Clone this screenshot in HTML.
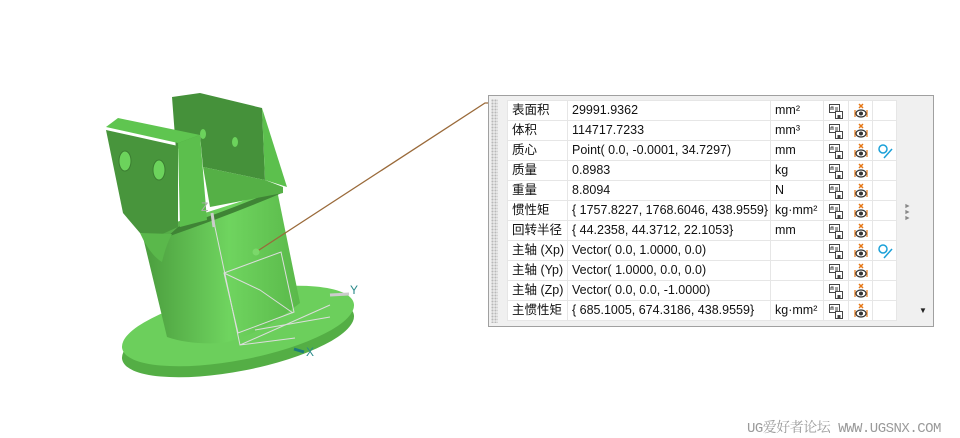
<!DOCTYPE html>
<html><head><meta charset="utf-8"><style>
body{margin:0;width:960px;height:438px;background:#fff;position:relative;overflow:hidden;font-family:"Liberation Sans","Noto Sans CJK SC",sans-serif}
#panel{position:absolute;left:488px;top:95px;width:444px;height:230px;border:1px solid #a0a0a0;background:#f0f0f0}
#grip{position:absolute;left:2px;top:3px;width:7px;height:224px;background-image:radial-gradient(#b8b8b8 1px,transparent 1.2px);background-size:3px 3px}
table{position:absolute;left:18px;top:4px;border-collapse:collapse;background:#fff;font-size:12.5px;color:#111;table-layout:fixed}
tr{height:20px}
td{border:1px solid #e6e6e6;height:20px;line-height:17px;padding:0 0 0 4px;white-space:nowrap;overflow:hidden;box-sizing:border-box}
td.i{padding:0;text-align:center}
td.i svg{display:block;margin:1px auto 0}
.w{position:absolute;left:747px;top:417px;font-family:"Liberation Mono","Noto Serif CJK SC",monospace;font-size:14px;color:#9a9a9a;letter-spacing:-0.5px}
</style></head><body>
<svg width="0" height="0" style="position:absolute">
<defs>
<g id="ic1"><rect x="1.5" y="1.5" width="10" height="8" fill="#fff" stroke="#444"/><path d="M3,4h2v3M3,4v3M7,5h3M7,7h3" stroke="#444" fill="none"/><rect x="7.5" y="8.5" width="7" height="7" fill="#fff" stroke="#444"/><rect x="9.5" y="12" width="3" height="3" fill="#444"/></g>
<g id="ic2"><path d="M6,1l4,4M10,1l-4,4" stroke="#e67817" stroke-width="1.5"/><path d="M2,7v7M2,10.5h3M14,7v7M14,10.5h-3" stroke="#e67817" stroke-width="1.2"/><ellipse cx="8" cy="10.5" rx="5" ry="3.5" fill="#fff" stroke="#333" stroke-width="1.2"/><circle cx="8" cy="10.5" r="2" fill="#333"/></g>
<g id="ic3"><circle cx="6" cy="6" r="4" fill="none" stroke="#1aa0d8" stroke-width="1.5"/><path d="M7,15L15,6" stroke="#1aa0d8" stroke-width="1.5"/></g>
</defs></svg>
<svg width="960" height="438" style="position:absolute;left:0;top:0">
<defs>
<linearGradient id="cy" x1="0" x2="1"><stop offset="0" stop-color="#4a9c3d"/><stop offset=".55" stop-color="#6fd45f"/><stop offset="1" stop-color="#5ab94a"/></linearGradient>
</defs>
<ellipse cx="238" cy="337" rx="118" ry="34" transform="rotate(-11 238 337)" fill="#54ae45"/>
<ellipse cx="238" cy="326" rx="118" ry="34" transform="rotate(-11 238 326)" fill="#6ccf5c"/>
<path d="M142,233 L277,190 L300,303 Q260,335 223,343 Q190,345 167,337 Z" fill="url(#cy)"/>
<path d="M167,237 Q230,215 282,193 L283,187 Q230,210 178,227 Z" fill="#3f8435"/>
<polygon points="172,97 200,93 262,108 265,180 203,167 200,135 176,150" fill="#45913a"/>
<polygon points="262,108 287,187 265,180" fill="#5cc04d"/>
<polygon points="203,167 265,180 283,187 283,193 210,207" fill="#55b046"/>
<polygon points="106,127 118,118 200,135 178,143" fill="#5fc550"/>
<polygon points="106,130 178,146 178,227 160,235 140,233 123,213" fill="#48953c"/>
<polygon points="178,143 200,135 207,220 180,227" fill="#5cbf4d"/>
<path d="M140,233 Q150,255 162,262 Q166,245 172,234 Z" fill="#5ab84b"/>
<ellipse cx="125" cy="161" rx="6" ry="10" fill="#6cd35c" stroke="#3b7d31"/>
<ellipse cx="159" cy="170" rx="6" ry="10" fill="#6cd35c" stroke="#3b7d31"/>
<ellipse cx="203" cy="134" rx="3" ry="5" fill="#6cd35c"/>
<ellipse cx="235" cy="142" rx="3" ry="5" fill="#6cd35c"/>
<g stroke="#ddd" fill="none" stroke-width="1">
<path d="M212,213 L240,345 L295,338 M240,345 L330,305"/>
<path d="M224,273 L281,252 L294,312 L238,333 Z M224,273 L260,290 L293,313 M255,330 L330,317"/>
</g>
<path d="M212,213 L214,227" stroke="#ccc" stroke-width="3"/>
<text x="201" y="211" font-size="12" fill="#aaa" font-family="Liberation Sans">Z</text>
<path d="M330,295 L349,294" stroke="#ccc" stroke-width="3"/>
<text x="350" y="294" font-size="12" fill="#2a8a8a" font-family="Liberation Sans">Y</text>
<path d="M294,349 L304,352" stroke="#1c7a7a" stroke-width="3"/>
<text x="306" y="356" font-size="12" fill="#2a8a8a" font-family="Liberation Sans">X</text>
<path d="M256,252 L485,103 L492,103" stroke="#9a6a3a" stroke-width="1.3" fill="none"/>
<circle cx="256" cy="252" r="3.5" fill="#7bd86a"/>
</svg>
<div id="panel"><div id="grip"></div>
<table>
<colgroup><col style="width:60px"><col style="width:203px"><col style="width:53px"><col style="width:25px"><col style="width:24px"><col style="width:24px"></colgroup>
<tbody>
<tr><td>表面积</td><td>29991.9362</td><td>mm²</td><td class="i"><svg width="16" height="17"><use href="#ic1"/></svg></td><td class="i"><svg width="16" height="17"><use href="#ic2"/></svg></td><td class="i"></td></tr>
<tr><td>体积</td><td>114717.7233</td><td>mm³</td><td class="i"><svg width="16" height="17"><use href="#ic1"/></svg></td><td class="i"><svg width="16" height="17"><use href="#ic2"/></svg></td><td class="i"></td></tr>
<tr><td>质心</td><td>Point( 0.0, -0.0001, 34.7297)</td><td>mm</td><td class="i"><svg width="16" height="17"><use href="#ic1"/></svg></td><td class="i"><svg width="16" height="17"><use href="#ic2"/></svg></td><td class="i"><svg width="16" height="17"><use href="#ic3"/></svg></td></tr>
<tr><td>质量</td><td>0.8983</td><td>kg</td><td class="i"><svg width="16" height="17"><use href="#ic1"/></svg></td><td class="i"><svg width="16" height="17"><use href="#ic2"/></svg></td><td class="i"></td></tr>
<tr><td>重量</td><td>8.8094</td><td>N</td><td class="i"><svg width="16" height="17"><use href="#ic1"/></svg></td><td class="i"><svg width="16" height="17"><use href="#ic2"/></svg></td><td class="i"></td></tr>
<tr><td>惯性矩</td><td>{ 1757.8227, 1768.6046, 438.9559}</td><td>kg·mm²</td><td class="i"><svg width="16" height="17"><use href="#ic1"/></svg></td><td class="i"><svg width="16" height="17"><use href="#ic2"/></svg></td><td class="i"></td></tr>
<tr><td>回转半径</td><td>{ 44.2358, 44.3712, 22.1053}</td><td>mm</td><td class="i"><svg width="16" height="17"><use href="#ic1"/></svg></td><td class="i"><svg width="16" height="17"><use href="#ic2"/></svg></td><td class="i"></td></tr>
<tr><td>主轴 (Xp)</td><td>Vector( 0.0, 1.0000, 0.0)</td><td></td><td class="i"><svg width="16" height="17"><use href="#ic1"/></svg></td><td class="i"><svg width="16" height="17"><use href="#ic2"/></svg></td><td class="i"><svg width="16" height="17"><use href="#ic3"/></svg></td></tr>
<tr><td>主轴 (Yp)</td><td>Vector( 1.0000, 0.0, 0.0)</td><td></td><td class="i"><svg width="16" height="17"><use href="#ic1"/></svg></td><td class="i"><svg width="16" height="17"><use href="#ic2"/></svg></td><td class="i"></td></tr>
<tr><td>主轴 (Zp)</td><td>Vector( 0.0, 0.0, -1.0000)</td><td></td><td class="i"><svg width="16" height="17"><use href="#ic1"/></svg></td><td class="i"><svg width="16" height="17"><use href="#ic2"/></svg></td><td class="i"></td></tr>
<tr><td>主惯性矩</td><td>{ 685.1005, 674.3186, 438.9559}</td><td>kg·mm²</td><td class="i"><svg width="16" height="17"><use href="#ic1"/></svg></td><td class="i"><svg width="16" height="17"><use href="#ic2"/></svg></td><td class="i"></td></tr>
</tbody></table>
<div style="position:absolute;left:415px;top:108px;font-size:7px;line-height:6px;color:#888">►<br>►<br>►</div>
<div style="position:absolute;left:430px;top:210px;font-size:8px;color:#222">▼</div>
</div>
<div class="w">UG爱好者论坛 WWW.UGSNX.COM</div>
</body></html>
